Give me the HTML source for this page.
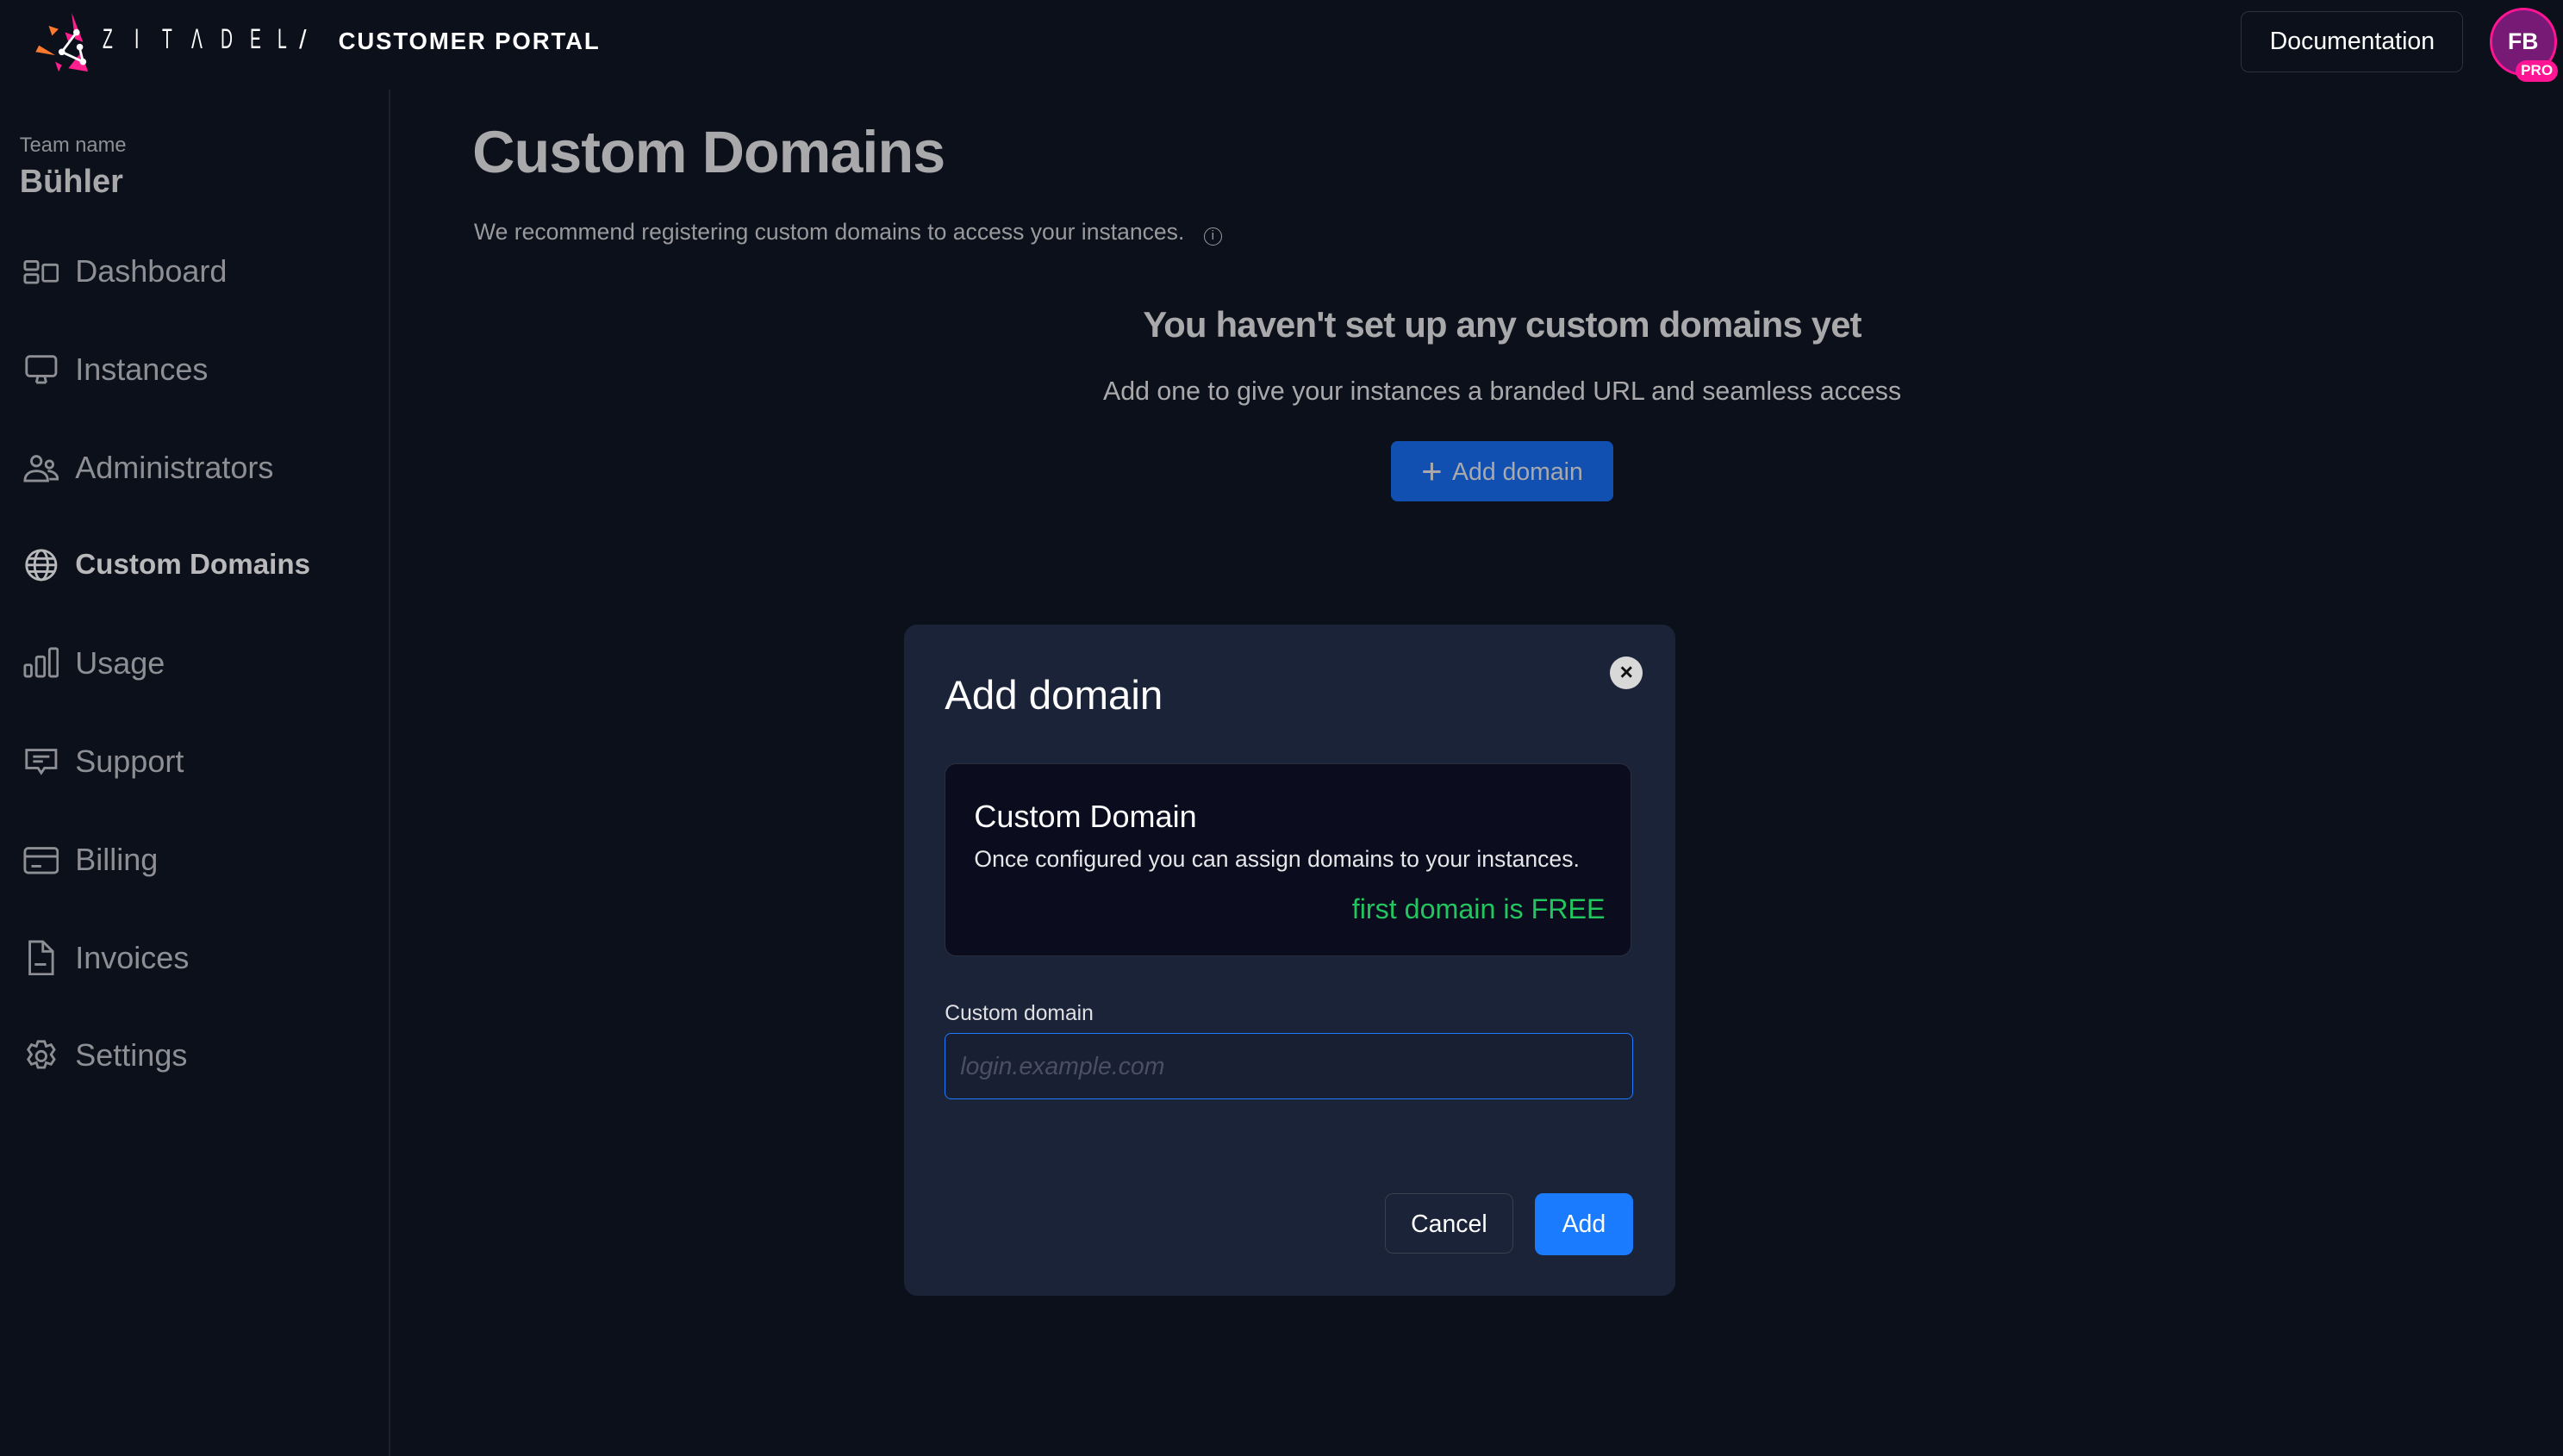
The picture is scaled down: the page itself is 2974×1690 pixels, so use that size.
<!DOCTYPE html>
<html><head><meta charset="utf-8"><style>
html,body{margin:0;padding:0;background:#0c101b;overflow:hidden}
#w{width:1568px;height:891px;zoom:1.8967;position:relative;font-family:"Liberation Sans",sans-serif;color:#a8a8aa}
.a{position:absolute;white-space:nowrap}
.nav{position:absolute;left:14px;display:flex;align-items:center;font-size:19px;color:#8e8f94}
.nav svg{width:22px;height:22px;margin-right:10px;fill:none;stroke:#8e8f94;stroke-width:1.5}
.lg{position:absolute;top:14px;font-size:17px;color:#fff;transform:scaleX(.6);transform-origin:left;font-weight:300}
</style></head><body><div id="w">
<svg class="a" style="left:16px;top:6px" width="40" height="40" viewBox="0 0 40 40">
<polygon points="28,2 35,20 30,18" fill="#ff1f8e"/><polygon points="8,22 18,28 6,26" fill="#ff7a2e"/><polygon points="34,26 38,38 26,36" fill="#ff1f8e"/><polygon points="14,10 20,12 16,16" fill="#ff7a2e"/><polygon points="24,14 30,16 26,20" fill="#ff1f8e"/><polygon points="18,32 22,34 20,38" fill="#ff1f8e"/>
<path d="M31 14 L22 26 L35 32 L33 24" stroke="#fff" stroke-width="1.5" fill="none"/><circle cx="31" cy="14" r="2" fill="#fff"/><circle cx="22" cy="26" r="2" fill="#fff"/><circle cx="35" cy="32" r="2" fill="#fff"/><circle cx="33" cy="23" r="2" fill="#fff"/></svg>
<span class="lg" style="left:63px">Z</span><span class="lg" style="left:82px">I</span><span class="lg" style="left:99px">T</span><span class="lg" style="left:117px">Λ</span><span class="lg" style="left:135px">D</span><span class="lg" style="left:153px">E</span><span class="lg" style="left:170px">L</span>
<div class="a" style="left:183px;top:16px;font-size:16px;color:#fff">/</div>
<div class="a" style="left:207px;top:17px;font-size:14.5px;color:#fff;font-weight:bold;letter-spacing:1px">CUSTOMER PORTAL</div>
<div class="a" style="left:1371px;top:7px;width:135px;height:36px;border:1px solid #2c313d;border-radius:5px;color:#fff;font-size:15px;line-height:36px;text-align:center">Documentation</div>
<div class="a" style="left:1523px;top:5px;width:38px;height:38px;border-radius:50%;background:#761a76;border:2px solid #ff1493;color:#fff;font-weight:bold;font-size:14px;line-height:38px;text-align:center">FB</div>
<div class="a" style="left:1539px;top:37px;width:26px;height:13px;border-radius:7px;background:#ff1493;color:#fff;font-size:9px;font-weight:bold;line-height:13px;text-align:center">PRO</div>
<div class="a" style="left:238px;top:55px;width:1px;height:836px;background:#1c2130"></div>
<div class="a" style="left:12px;top:82px;font-size:12.5px;color:#8e8f94">Team name</div>
<div class="a" style="left:12px;top:100px;font-size:20px;font-weight:bold;color:#a8a8aa">Bühler</div>
<div class="nav" style="top:155px"><svg viewBox="0 0 22 22"><rect x="1" y="5" width="8" height="5" rx="1"/><rect x="1" y="13" width="8" height="5" rx="1"/><rect x="12" y="7" width="9" height="10" rx="1"/></svg>Dashboard</div>
<div class="nav" style="top:215px"><svg viewBox="0 0 22 22"><rect x="2" y="3" width="18" height="12" rx="2"/><path d="M8 19h6M9 15l-1 4M13 15l1 4"/></svg>Instances</div>
<div class="nav" style="top:275px"><svg viewBox="0 0 22 22"><circle cx="8" cy="7" r="3"/><circle cx="16" cy="9" r="2.2"/><path d="M1 19c0-4 3-6 7-6s7 2 7 6zM15 13c3 0 6 2 6 5h-5"/></svg>Administrators</div>
<div class="nav" style="top:335px;color:#b9b9bb;font-weight:bold;font-size:17.5px"><svg viewBox="0 0 22 22" style="stroke:#b9b9bb"><circle cx="11" cy="11" r="9"/><ellipse cx="11" cy="11" rx="4" ry="9"/><path d="M2 11h18M3 7h16M3 15h16"/></svg>Custom Domains</div>
<div class="nav" style="top:395px"><svg viewBox="0 0 22 22"><rect x="1" y="12" width="4" height="7" rx="1"/><rect x="8" y="7" width="5" height="12" rx="1"/><rect x="16" y="2" width="5" height="17" rx="1"/></svg>Usage</div>
<div class="nav" style="top:455px"><svg viewBox="0 0 22 22"><path d="M2 4h18v11h-7l-2 3-2-3H2z"/><path d="M6 8h10M6 11h6"/></svg>Support</div>
<div class="nav" style="top:515px"><svg viewBox="0 0 22 22"><rect x="1" y="4" width="20" height="15" rx="2"/><path d="M1 9h20M5 15h6"/></svg>Billing</div>
<div class="nav" style="top:575px"><svg viewBox="0 0 22 22"><path d="M4 1h8l6 6v14H4z"/><path d="M12 1v6h6M7 15h7"/></svg>Invoices</div>
<div class="nav" style="top:635px"><svg viewBox="0 0 22 22"><circle cx="11" cy="11" r="3"/><path d="M9 2h4l1 3 3-1 2 3-2 3 2 3-2 3-3-1-1 3H9l-1-3-3 1-2-3 2-3-2-3 2-3 3 1z"/></svg>Settings</div>
<div class="a" style="left:289px;top:73px;font-size:36px;font-weight:bold;color:#a9a9ab;letter-spacing:-.5px">Custom Domains</div>
<div class="a" style="left:290px;top:134px;font-size:14px;color:#9a9a9d">We recommend registering custom domains to access your instances. <span style="display:inline-block;width:10px;height:10px;border:1px solid #9a9a9d;border-radius:50%;font-size:8px;line-height:10px;text-align:center;margin-left:8px">i</span></div>
<div class="a" style="left:676px;top:186px;width:486px;text-align:center;font-size:22px;font-weight:bold;color:#a9a9ab;letter-spacing:-.4px">You haven't set up any custom domains yet</div>
<div class="a" style="left:656px;top:231px;width:526px;text-align:center;font-size:16px;color:#a9a9ab">Add one to give your instances a branded URL and seamless access</div>
<div class="a" style="left:851px;top:270px;width:136px;height:37px;border-radius:4px;background:#1150b0;color:#a9a9ab;font-size:15px;line-height:37px;text-align:center"><span style="font-size:22px;vertical-align:-2px;margin-right:6px">+</span>Add domain</div>
<div class="a" style="left:553px;top:382px;width:472px;height:411px;border-radius:8px;background:#1b2339"></div>
<div class="a" style="left:985px;top:402px;width:20px;height:20px;border-radius:50%;background:#d8d8d8;color:#111;font-size:14px;font-weight:bold;line-height:20px;text-align:center">×</div>
<div class="a" style="left:578px;top:411px;font-size:25px;color:#fff">Add domain</div>
<div class="a" style="left:578px;top:467px;width:420px;height:118px;border-radius:7px;background:#0b0d1f;border:1px solid #2a2f3e;box-sizing:border-box"></div>
<div class="a" style="left:596px;top:489px;font-size:19px;color:#fff">Custom Domain</div>
<div class="a" style="left:596px;top:518px;font-size:14px;color:#e6e6e8">Once configured you can assign domains to your instances.</div>
<div class="a" style="left:780px;top:547px;width:202px;text-align:right;font-size:17px;color:#22c55e">first domain is FREE</div>
<div class="a" style="left:578px;top:613px;font-size:13px;color:#e0e0e2">Custom domain</div>
<div class="a" style="left:578px;top:632px;width:421px;height:41px;border:1px solid #1f7aff;border-radius:4px;background:#181f33;box-sizing:border-box;padding-left:9px;line-height:41px;font-size:15px;font-style:italic;color:#4a5060">login.example.com</div>
<div class="a" style="left:847px;top:730px;width:79px;height:37px;border:1px solid #3a3f4c;border-radius:5px;box-sizing:border-box;color:#fff;font-size:15px;line-height:37px;text-align:center">Cancel</div>
<div class="a" style="left:939px;top:730px;width:60px;height:38px;border-radius:5px;background:#1a7bff;color:#fff;font-size:15px;line-height:38px;text-align:center">Add</div>
</div></body></html>
